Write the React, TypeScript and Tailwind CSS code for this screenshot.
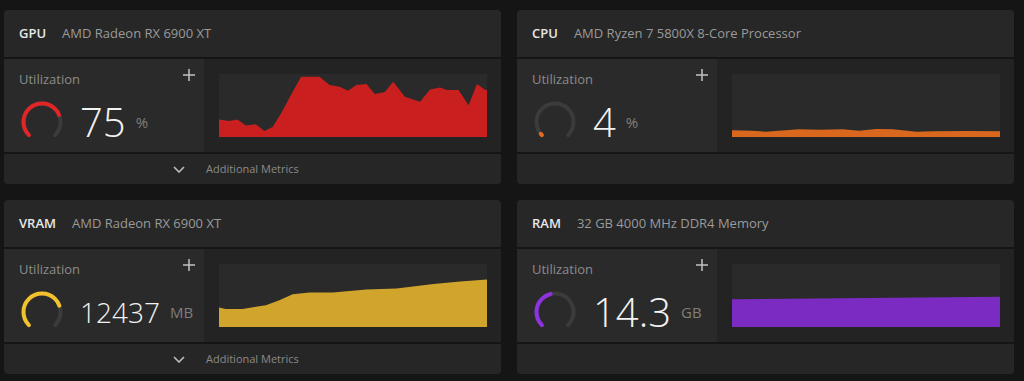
import React from 'react';

type Metric = {
  title: string;
  device: string;
  value: string;
  unit: string;
  pct: number;
  gauge: string;
  fill: string;
  valueSize: string;
  points: string;
  footer: boolean;
};

const metrics: Metric[] = [
  {
    title: 'GPU',
    device: 'AMD Radeon RX 6900 XT',
    value: '75',
    unit: '%',
    pct: 75,
    gauge: '#e02626',
    fill: '#c91f1f',
    valueSize: 'text-[40px]',
    points:
      '0,136 30,140 55,136 80,154 110,150 135,170 160,158 185,118 220,53 245,8 300,8 330,33 360,38 385,50 410,33 440,30 465,60 495,54 520,23 555,68 600,83 630,46 660,40 680,48 715,48 745,93 770,30 795,48 800,48 800,188 0,188',
    footer: true,
  },
  {
    title: 'CPU',
    device: 'AMD Ryzen 7 5800X 8-Core Processor',
    value: '4',
    unit: '%',
    pct: 2,
    gauge: '#e8681c',
    fill: '#d9681e',
    valueSize: 'text-[40px]',
    points:
      '0,168 60,169 100,172 200,165 260,166 330,165 380,169 430,164 480,165 550,172 600,171 700,170 800,171 800,188 0,188',
    footer: false,
  },
  {
    title: 'VRAM',
    device: 'AMD Radeon RX 6900 XT',
    value: '12437',
    unit: 'MB',
    pct: 76,
    gauge: '#f2c12e',
    fill: '#d1a52b',
    valueSize: 'text-[28px]',
    points:
      '0,130 20,134 70,134 140,123 180,108 220,90 270,85 340,85 440,76 530,73 640,60 720,52 800,46 800,188 0,188',
    footer: true,
  },
  {
    title: 'RAM',
    device: '32 GB 4000 MHz DDR4 Memory',
    value: '14.3',
    unit: 'GB',
    pct: 45,
    gauge: '#8f32e0',
    fill: '#7b2bc2',
    valueSize: 'text-[40px]',
    points: '0,105 800,98 800,188 0,188',
    footer: false,
  },
];

function Gauge({ pct, color }: { pct: number; color: string }) {
  const arc = 'M 8.9 35.1 A 18.5 18.5 0 1 1 35.1 35.1';
  return (
    <svg width="44" height="44" viewBox="0 0 44 44" className="shrink-0">
      <path d={arc} fill="none" stroke="#3b3b3b" strokeWidth="4" strokeLinecap="round" />
      <path
        d={arc}
        fill="none"
        stroke={color}
        strokeWidth="4"
        strokeLinecap="round"
        pathLength={100}
        strokeDasharray={`${pct} 100`}
      />
    </svg>
  );
}

function Card({ m }: { m: Metric }) {
  return (
    <div className="flex flex-col gap-[2px] w-[497px]">
      {/* шапка */}
      <div className="h-[47px] rounded-t-[4px] bg-[#272727] flex items-center pl-[15px] text-[13px]">
        <span className="font-semibold text-[#e8e8e8]">{m.title}</span>
        <span className="ml-[16px] text-[#9a9a9a]">{m.device}</span>
      </div>

      {/* тело */}
      <div className="h-[93px] flex">
        <div className="w-[200px] bg-[#2a2a2a] flex flex-col">
          <div className="flex justify-between items-start pt-[11px] pl-[15px] pr-[9px]">
            <span className="text-[13px] leading-[18px] text-[#8c8c8c]">Utilization</span>
            <svg width="12" height="12" viewBox="0 0 12 12" className="-mt-[1px]">
              <path d="M6 0 V12 M0 6 H12" stroke="#c2c2c2" strokeWidth="1.5" />
            </svg>
          </div>
          <div className="mt-[12px] flex items-center pl-[16px]">
            <Gauge pct={m.pct} color={m.gauge} />
            <div className="ml-[16px] flex items-center">
              <span className={`${m.valueSize} font-light leading-none text-[#f2f2f2]`}>{m.value}</span>
              <span className="ml-[10px] text-[15px] leading-none text-[#7e7e7e]">{m.unit}</span>
            </div>
          </div>
        </div>
        <div className="flex-1 bg-[#232323] p-[15px] pr-[14px]">
          <div className="w-full h-full bg-[#2a2a2a]">
            <svg width="100%" height="100%" viewBox="0 0 800 188" preserveAspectRatio="none" className="block">
              <polygon points={m.points} fill={m.fill} />
            </svg>
          </div>
        </div>
      </div>

      {/* подвал */}
      <div className="h-[30px] rounded-b-[4px] bg-[#262626] flex items-center">
        {m.footer && (
          <>
            <div className="w-[200px] flex justify-end pr-[19px]">
              <svg width="12" height="7" viewBox="0 0 12 7">
                <polyline points="1,1 6,6 11,1" fill="none" stroke="#bdbdbd" strokeWidth="1.6" />
              </svg>
            </div>
            <span className="pl-[2px] text-[11px] text-[#8a8a8a]">Additional Metrics</span>
          </>
        )}
      </div>
    </div>
  );
}

export default function App() {
  return (
    <div
      className="w-[1024px] h-[381px] bg-[#151515] pt-[10px] pl-[4px] overflow-hidden"
      style={{ fontFamily: '"Open Sans", "Noto Sans", sans-serif' }}
    >
      <div className="grid grid-cols-[497px_497px] gap-4">
        {metrics.map((m) => (
          <Card key={m.title} m={m} />
        ))}
      </div>
    </div>
  );
}
